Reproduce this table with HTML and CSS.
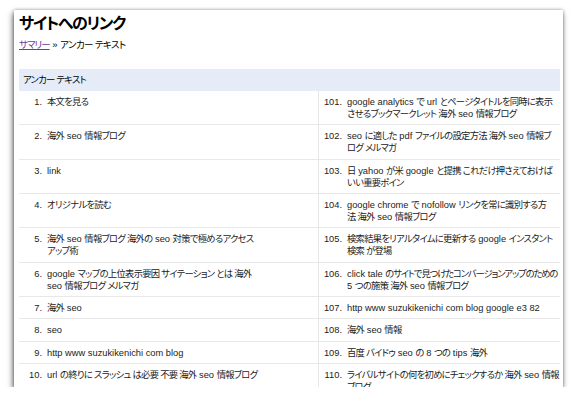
FILE: index.html
```html
<!DOCTYPE html>
<html lang="ja">
<head>
<meta charset="utf-8">
<title>サイトへのリンク</title>
<link rel="stylesheet" href="styles.css">
</head>
<body>
<div class="card">
  <h1 class="title">サイトへのリンク</h1>
  <div class="crumb"><a href="#" class="crumb-link">サマリー</a> » <span class="j">アンカー テキスト</span></div>
  <div class="table">
    <div class="thead"><span class="j">アンカー テキスト</span></div>
    <div class="row">
      <div class="cell"><span class="num">1.</span><span class="txt"><span class="j">本文を見る</span></span></div>
      <div class="cell right"><span class="num">101.</span><span class="txt">google analytics <span class="j">で</span> url <span class="j">とページタイトルを同時に表示</span><br><span class="j">させるブックマークレット 海外</span> seo <span class="j">情報ブログ</span></span></div>
    </div>
    <div class="row">
      <div class="cell"><span class="num">2.</span><span class="txt"><span class="j">海外</span> seo <span class="j">情報ブログ</span></span></div>
      <div class="cell right"><span class="num">102.</span><span class="txt">seo <span class="j">に適した</span> pdf <span class="j">ファイルの設定方法 海外</span> seo <span class="j">情報ブ</span><br><span class="j">ログ メルマガ</span></span></div>
    </div>
    <div class="row">
      <div class="cell"><span class="num">3.</span><span class="txt">link</span></div>
      <div class="cell right"><span class="num">103.</span><span class="txt"><span class="j">日</span> yahoo <span class="j">が米</span> google <span class="j">と提携 これだけ押さえておけば</span><br><span class="j">いい重要ポイン</span></span></div>
    </div>
    <div class="row">
      <div class="cell"><span class="num">4.</span><span class="txt"><span class="j">オリジナルを読む</span></span></div>
      <div class="cell right"><span class="num">104.</span><span class="txt">google chrome <span class="j">で</span> nofollow <span class="j">リンクを常に識別する方</span><br><span class="j">法 海外</span> seo <span class="j">情報ブログ</span></span></div>
    </div>
    <div class="row">
      <div class="cell"><span class="num">5.</span><span class="txt"><span class="j">海外</span> seo <span class="j">情報ブログ 海外の</span> seo <span class="j">対策で極めるアクセス</span><br><span class="j">アップ術</span></span></div>
      <div class="cell right"><span class="num">105.</span><span class="txt"><span class="j">検索結果をリアルタイムに更新する</span> google <span class="j">インスタント</span><br><span class="j">検索 が登場</span></span></div>
    </div>
    <div class="row">
      <div class="cell"><span class="num">6.</span><span class="txt">google <span class="j">マップの上位表示要因 サイテーション とは 海外</span><br>seo <span class="j">情報ブログ メルマガ</span></span></div>
      <div class="cell right"><span class="num">106.</span><span class="txt">click tale <span class="j tight">のサイトで見つけたコンバージョンアップのための</span><br>5 <span class="j">つの施策 海外</span> seo <span class="j">情報ブログ</span></span></div>
    </div>
    <div class="row">
      <div class="cell"><span class="num">7.</span><span class="txt"><span class="j">海外</span> seo</span></div>
      <div class="cell right"><span class="num">107.</span><span class="txt">http www suzukikenichi com blog google e3 82</span></div>
    </div>
    <div class="row">
      <div class="cell"><span class="num">8.</span><span class="txt">seo</span></div>
      <div class="cell right"><span class="num">108.</span><span class="txt"><span class="j">海外</span> seo <span class="j">情報</span></span></div>
    </div>
    <div class="row">
      <div class="cell"><span class="num">9.</span><span class="txt">http www suzukikenichi com blog</span></div>
      <div class="cell right"><span class="num">109.</span><span class="txt"><span class="j">百度 バイドゥ</span> seo <span class="j">の</span> 8 <span class="j">つの</span> tips <span class="j">海外</span></span></div>
    </div>
    <div class="row">
      <div class="cell"><span class="num">10.</span><span class="txt">url <span class="j">の終りに スラッシュ は必要 不要 海外</span> seo <span class="j">情報ブログ</span></span></div>
      <div class="cell right"><span class="num">110.</span><span class="txt"><span class="j">ライバルサイトの何を初めにチェックするか 海外</span> seo <span class="j">情報</span><br><span class="j">ブログ</span></span></div>
    </div>
  </div>
</div>
</body>
</html>
```
FILE: styles.css
```css
html, body {
  margin: 0;
  padding: 0;
  background: #ffffff;
}

body {
  font-family: "Liberation Sans", Arial, "Noto Sans CJK JP", sans-serif;
  font-size: 9.3px;
  color: #222222;
  font-feature-settings: "palt";
}

.j {
  letter-spacing: -0.7px;
}

.j.tight {
  letter-spacing: -1.1px;
}

.card {
  box-sizing: border-box;
  margin: 10px 0 0 14px;
  width: 549px;
  height: 377px;
  padding: 0 3px 0 5px;
  overflow: hidden;
  background: #ffffff;
  box-shadow: -1px 3px 6px rgba(0, 0, 0, 0.6), 0 0 3px rgba(0, 0, 0, 0.3);
}

.title {
  margin: 4px 0 0;
  font-size: 16px;
  line-height: 20px;
  font-weight: bold;
  color: #000000;
  letter-spacing: -1.4px;
}

.crumb {
  margin-top: 4px;
  line-height: 14px;
  font-size: 9.5px;
  color: #000000;
}

.crumb-link {
  color: #6a3d9a;
  text-decoration: underline;
  letter-spacing: -1px;
}

.crumb .j {
  letter-spacing: -0.6px;
}

.table {
  margin-top: 17px;
}

.thead {
  height: 22px;
  line-height: 22px;
  padding-left: 4px;
  background: #e5ebf7;
  color: #000000;
}

.row {
  display: grid;
  grid-template-columns: 299px 1fr;
  border-bottom: 1px solid #e8e8e8;
}

.cell {
  display: grid;
  grid-template-columns: 23px 1fr;
  column-gap: 5px;
  padding: 5px 0 4.33px;
  line-height: 12px;
  white-space: nowrap;
}

.cell.right {
  border-left: 1px solid #e6e6e6;
}

.num {
  text-align: right;
  color: #222222;
}

.txt {
  color: #222222;
}
```
